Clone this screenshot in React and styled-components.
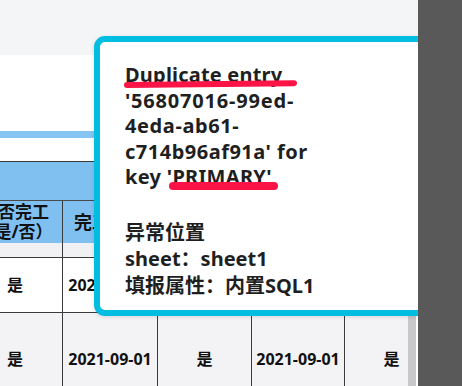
import React from 'react';
import styled, { createGlobalStyle } from 'styled-components';

const Global = createGlobalStyle`
  html, body { margin: 0; padding: 0; }
  body {
    width: 462px;
    height: 386px;
    overflow: hidden;
    font-family: "Noto Sans", "Noto Sans CJK SC", sans-serif;
    color: #1e1e1e;
  }
`;

const Screen = styled.div`
  display: flex;
  width: 462px;
  height: 386px;
`;

const Main = styled.div`
  position: relative;
  flex: 0 0 418px;
  height: 386px;
  overflow: hidden;
  background: #ffffff;
  display: flex;
  flex-direction: column;
`;

const SidePanel = styled.div`
  flex: 1;
  background: #595959;
`;

const TopBand = styled.div`
  height: 55px;
  flex: 0 0 55px;
  background: #f4f5f7;
`;

const Sheet = styled.div`
  flex: 1;
  padding-top: 76px;
  display: flex;
  flex-direction: column;
`;

const AccentBar = styled.div`
  height: 7px;
  background: #86c4f4;
  margin-bottom: 23px;
`;

const TableArea = styled.div`
  display: flex;
  flex: 1;
`;

const TableClip = styled.div`
  flex: 0 0 408px;
  overflow: hidden;
`;

const ScrollTrack = styled.div`
  flex: 0 0 8px;
  background: #c8c8c8;
  margin-right: 2px;
`;

const Table = styled.div`
  margin-left: -32px;
  width: 480px;
  border-top: 1px solid #3a3a3a;
`;

const HeaderTop = styled.div`
  height: 38px;
  background: #80c0f1;
  border-bottom: 1px solid #4a4a4a;
`;

const Row = styled.div`
  display: flex;
  height: ${p => p.h}px;
  background: ${p => p.bg || '#ffffff'};
  border-bottom: ${p => (p.line ? '1px solid #3a3a3a' : 'none')};
`;

const Cell = styled.div`
  flex: 0 0 ${p => p.w}px;
  box-sizing: border-box;
  border-right: 1px solid #3a3a3a;
  display: flex;
  align-items: center;
  justify-content: center;
  text-align: center;
  font-weight: 700;
  font-size: ${p => p.size || 16}px;
  line-height: ${p => p.lh || 20}px;
  color: #111;
  white-space: nowrap;
  overflow: hidden;
`;

const Tooltip = styled.div`
  position: absolute;
  left: 94px;
  top: 36px;
  width: 340px;
  height: 280px;
  box-sizing: border-box;
  border: 6px solid #02bde2;
  border-radius: 11px;
  background: #ffffff;
  padding: 20px 0 0 25px;
  box-shadow: 0 1px 4px rgba(0, 0, 0, 0.12);
  font-family: "Noto Sans", "Noto Sans CJK SC", sans-serif;
  font-weight: 700;
  font-size: 20px;
  color: #1f1f1f;
`;

const Line = styled.div`
  height: ${p => p.h || 25.5}px;
  line-height: ${p => p.h || 25.5}px;
  letter-spacing: ${p => p.ls || 0}px;
  white-space: nowrap;
`;

const Marked = styled.span`
  position: relative;
  &::after {
    content: '';
    position: absolute;
    left: ${p => p.l}px;
    right: ${p => p.r}px;
    top: ${p => p.t}px;
    height: ${p => p.th}px;
    border-radius: ${p => p.th}px;
    background: #fb1445;
    transform: rotate(${p => p.rot || 0}deg);
  }
`;

const widths = [95, 95, 94, 93, 94];

const DataRow = ({ h, bg }) => (
  <Row h={h} bg={bg} line>
    <Cell w={widths[0]}>是</Cell>
    <Cell w={widths[1]}>2021-09-01</Cell>
    <Cell w={widths[2]}>是</Cell>
    <Cell w={widths[3]}>2021-09-01</Cell>
    <Cell w={widths[4]}>是</Cell>
  </Row>
);

export default function App() {
  return (
    <>
      <Global />
      <Screen>
        <Main>
          <TopBand />
          <Sheet>
            <AccentBar />
            <TableArea>
              <TableClip>
                <Table>
                  <HeaderTop />
                  <Row h={42} bg="#80c0f1">
                    <Cell w={widths[0]} size={17} lh={20}>是否完工<br />（是/否）</Cell>
                    <Cell w={widths[1]} size={18}>完工日期</Cell>
                    <Cell w={widths[2]} size={17} lh={20}>是否验收<br />（是/否）</Cell>
                    <Cell w={widths[3]} size={18}>验收日期</Cell>
                    <Cell w={widths[4]} size={17} lh={20}>是否归档<br />（是/否）</Cell>
                  </Row>
                  <Row h={14} bg="#f1f1f3" line>
                    {widths.map((w, i) => <Cell key={i} w={w} />)}
                  </Row>
                  <DataRow h={54} bg="#ffffff" />
                  <DataRow h={92} bg="#f3f3f6" />
                </Table>
              </TableClip>
              <ScrollTrack />
            </TableArea>
          </Sheet>
          <Tooltip>
            <Line ls={0.2}>
              <Marked l={-1} r={-15} t={20} th={6} rot={-0.6}>Duplicate entry</Marked>
            </Line>
            <Line ls={0.8}>'56807016-99ed-</Line>
            <Line ls={0.6}>4eda-ab61-</Line>
            <Line ls={0.5}>c714b96af91a' for</Line>
            <Line ls={0.3}>
              key '<Marked l={-3} r={-12} t={19} th={8}>PRIMARY</Marked>'
            </Line>
            <Line h={30} />
            <Line h={26.5}>异常位置</Line>
            <Line h={26.5}>sheet：sheet1</Line>
            <Line h={26.5}>填报属性：内置SQL1</Line>
          </Tooltip>
        </Main>
        <SidePanel />
      </Screen>
    </>
  );
}
